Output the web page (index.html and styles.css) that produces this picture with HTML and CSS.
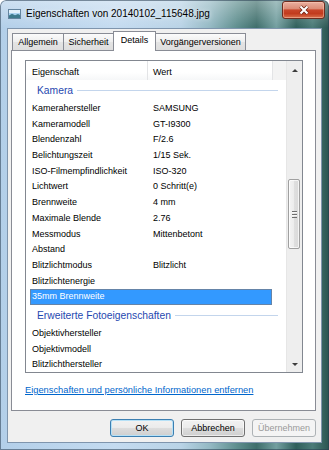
FILE: index.html
```html
<!DOCTYPE html>
<html lang="de">
<head>
    <meta charset="UTF-8">
    <title>Eigenschaften von 20140102_115648.jpg</title>
    <link rel="stylesheet" href="styles.css">
</head>
<body>
<div class="window">
    <div class="titlebar">
        <svg class="file-icon" width="13" height="10" viewBox="0 0 13 10">
            <rect x="0.5" y="0.5" width="12" height="9" fill="#a9d2f0" stroke="#64849e"/>
            <rect x="1" y="1" width="11" height="3" fill="#e2f0fa"/>
            <path d="M1 6.5 L4 4.8 L7 6.2 L10 5 L12 6 L12 9 L1 9 Z" fill="#3d7a8c"/>
        </svg>
        <span class="title">Eigenschaften von 20140102_115648.jpg</span>
        <div class="close-btn">
            <svg width="12" height="10" viewBox="0 0 12 10">
                <path d="M2.5 1.5 L9.5 8.5 M9.5 1.5 L2.5 8.5" stroke="#6a2414" stroke-width="3.6"/>
                <path d="M2.5 1.5 L9.5 8.5 M9.5 1.5 L2.5 8.5" stroke="#fff" stroke-width="2.1"/>
            </svg>
        </div>
    </div>

    <div class="client">
        <div class="tabs">
            <div class="tab tab-allgemein">Allgemein</div>
            <div class="tab tab-sicherheit">Sicherheit</div>
            <div class="tab tab-details active">Details</div>
            <div class="tab tab-versionen">Vorgängerversionen</div>
        </div>

        <div class="panel">
            <div class="listbox">
                <div class="list">
                    <div class="list-header">
                        <div class="col-name">Eigenschaft</div>
                        <div class="col-value">Wert</div>
                        <div class="col-rest"></div>
                    </div>

                    <div class="group"><span>Kamera</span><i class="group-line"></i></div>
                    <div class="row"><span class="name">Kamerahersteller</span><span class="value">SAMSUNG</span></div>
                    <div class="row"><span class="name">Kameramodell</span><span class="value">GT-I9300</span></div>
                    <div class="row"><span class="name">Blendenzahl</span><span class="value">F/2.6</span></div>
                    <div class="row"><span class="name">Belichtungszeit</span><span class="value">1/15 Sek.</span></div>
                    <div class="row"><span class="name">ISO-Filmempfindlichkeit</span><span class="value">ISO-320</span></div>
                    <div class="row"><span class="name">Lichtwert</span><span class="value">0 Schritt(e)</span></div>
                    <div class="row"><span class="name">Brennweite</span><span class="value">4 mm</span></div>
                    <div class="row"><span class="name">Maximale Blende</span><span class="value">2.76</span></div>
                    <div class="row"><span class="name">Messmodus</span><span class="value">Mittenbetont</span></div>
                    <div class="row"><span class="name">Abstand</span><span class="value"></span></div>
                    <div class="row"><span class="name">Blitzlichtmodus</span><span class="value">Blitzlicht</span></div>
                    <div class="row"><span class="name">Blitzlichtenergie</span><span class="value"></span></div>
                    <div class="row selected"><span class="name">35mm Brennweite</span><span class="value"></span></div>

                    <div class="group"><span>Erweiterte Fotoeigenschaften</span><i class="group-line"></i></div>
                    <div class="row"><span class="name">Objektivhersteller</span><span class="value"></span></div>
                    <div class="row"><span class="name">Objektivmodell</span><span class="value"></span></div>
                    <div class="row"><span class="name">Blitzlichthersteller</span><span class="value"></span></div>
                </div>

                <div class="scrollbar">
                    <div class="arrow"><span class="arrow-up"></span></div>
                    <div class="track">
                        <div class="thumb"><span class="grip"></span></div>
                    </div>
                    <div class="arrow"><span class="arrow-down"></span></div>
                </div>
            </div>

            <a class="link" href="#">Eigenschaften und persönliche Informationen entfernen</a>
        </div>

        <div class="buttons">
            <button class="btn btn-default">OK</button>
            <button class="btn">Abbrechen</button>
            <button class="btn" disabled>Übernehmen</button>
        </div>
    </div>
</div>
</body>
</html>
```

FILE: styles.css
```css
body {
    margin: 0;
    background: #fff;
    font-family: "Liberation Sans", Arial, sans-serif;
    color: #000;
}

/* aero frame */
.window {
    width: 329px;
    height: 450px;
    box-sizing: border-box;
    padding: 0 7px 7px 7px;
    display: flex;
    flex-direction: column;
    border-radius: 6px 6px 0 0;
    background:
        linear-gradient(180deg, rgba(255, 255, 255, 0.35) 0, rgba(255, 255, 255, 0) 28px),
        linear-gradient(90deg, #b3cfe9 0%, #c4dbf0 35%, #b9d3e6 55%, #93b8c2 64%, #5e8e8e 72%, #3e6e6b 78%, #739fa0 84%, #2f5f5b 90%, #4b7b78 95%, #2a5450 100%);
    box-shadow: inset 0 0 0 1px rgba(40, 60, 80, 0.55);
}

.titlebar {
    height: 28px;
    display: flex;
    align-items: center;
    padding-left: 1px;
}

.file-icon {
    flex: none;
}

.title {
    margin-left: 5px;
    padding-bottom: 2px;
    font-size: 10px;
    white-space: nowrap;
    text-shadow: 0 0 5px rgba(255, 255, 255, 0.9);
}

.close-btn {
    margin-left: auto;
    margin-right: -3px;
    align-self: flex-start;
    margin-top: 1px;
    width: 43px;
    height: 18px;
    box-sizing: border-box;
    border: 1px solid #6e2c1f;
    border-radius: 3px;
    background: linear-gradient(180deg, #eab0a0 0%, #dc8c76 42%, #c8462a 50%, #c23b1e 72%, #d9704c 100%);
    box-shadow: inset 0 0 0 1px rgba(255, 210, 190, 0.45);
    display: flex;
    align-items: center;
    justify-content: center;
}

/* dialog body */
.client {
    flex: 1;
    display: flex;
    flex-direction: column;
    background: #f0f0f0;
    border: 1px solid #7f95ad;
}

.tabs {
    display: flex;
    align-items: flex-end;
    height: 19px;
    margin-top: 2px;
    padding-left: 4px;
}

.tab {
    height: 17px;
    box-sizing: border-box;
    margin-left: -1px;
    border: 1px solid #898c95;
    border-bottom: none;
    background: linear-gradient(180deg, #fbfbfb 0%, #eeeeee 50%, #e4e4e4 51%, #dedede 100%);
    font-size: 9px;
    text-align: center;
    padding-top: 1px;
    line-height: 15px;
    white-space: nowrap;
}

.tab:first-child {
    margin-left: 0;
}

.tab-allgemein { width: 52px; }
.tab-sicherheit { width: 51px; }
.tab-details { width: 43px; }
.tab-versionen { width: 91px; }

.tab.active {
    height: 20px;
    margin-bottom: -1px;
    padding-top: 0;
    line-height: 16px;
    background: #fff;
    position: relative;
    z-index: 1;
}

.panel {
    height: 361px;
    box-sizing: border-box;
    margin: 0 5px 0 3px;
    padding: 9px 12px 0 13px;
    border: 1px solid #898c95;
    background: #fff;
    display: flex;
    flex-direction: column;
}

/* property list */
.listbox {
    height: 313px;
    box-sizing: border-box;
    border: 1px solid #828790;
    display: flex;
    overflow: hidden;
}

.list {
    flex: 1;
    overflow: hidden;
    font-size: 9px;
}

.list-header {
    display: flex;
    height: 19px;
    box-sizing: border-box;
    line-height: 16px;
    padding-top: 3px;
    background: linear-gradient(180deg, #fff 0%, #fff 60%, #f6f7f8 100%);
}

.col-name {
    width: 122px;
    box-sizing: border-box;
    padding-left: 6px;
    border-right: 1px solid #e3e4e6;
    margin-top: -3px;
    padding-top: 3px;
}

.col-value {
    width: 125px;
    box-sizing: border-box;
    padding-left: 5px;
    border-right: 1px solid #e3e4e6;
    margin-top: -3px;
    padding-top: 3px;
}

.col-rest {
    flex: 1;
    margin-top: -3px;
    background: #f3f3f3;
}

.group {
    height: 21px;
    display: flex;
    align-items: center;
    margin: 0 8px 0 4px;
    padding-left: 7px;
    font-size: 10.3px;
    color: #1f48b0;
    white-space: nowrap;
}

.group-line {
    flex: 1;
    height: 1px;
    margin-left: 4px;
    background: #c3d5ec;
}

.row {
    display: flex;
    width: 242px;
    height: 15.7px;
    line-height: 15.7px;
    margin-left: 4px;
    white-space: nowrap;
}

.row .name {
    width: 121px;
    padding-left: 2px;
    box-sizing: border-box;
}

.row .value {
    padding-left: 2px;
}

.row.selected {
    background: #3399ff;
    color: #fff;
    box-shadow: inset 0 0 0 1px #6584a8;
}

/* scrollbar */
.scrollbar {
    width: 16px;
    box-sizing: border-box;
    border-left: 1px solid #e6e6e6;
    background: #eeeeee;
    display: flex;
    flex-direction: column;
}

.arrow {
    height: 16px;
    display: flex;
    align-items: center;
    justify-content: center;
}

.arrow-up {
    margin-top: 3px;
    border-left: 3px solid transparent;
    border-right: 3px solid transparent;
    border-bottom: 3px solid #3d3d3d;
}

.arrow-down {
    border-left: 3px solid transparent;
    border-right: 3px solid transparent;
    border-top: 3px solid #3d3d3d;
}

.track {
    flex: 1;
}

.thumb {
    margin: 102px 2px 0 1px;
    height: 70px;
    box-sizing: border-box;
    border: 1px solid #a0a0a0;
    border-radius: 2px;
    background: linear-gradient(90deg, #f4f4f4 0%, #ececec 50%, #dfdfdf 51%, #dadada 100%);
    box-shadow: inset 0 0 0 1px rgba(255, 255, 255, 0.7);
    display: flex;
    align-items: center;
    justify-content: center;
}

.grip {
    width: 5px;
    height: 7px;
    background: repeating-linear-gradient(180deg, #6e6e6e 0, #6e6e6e 1px, #f8f8f8 1px, #f8f8f8 2px, transparent 2px, transparent 3px);
}

.link {
    align-self: flex-start;
    margin-top: 12px;
    font-size: 9.3px;
    color: #0066cc;
    text-decoration: underline;
}

/* buttons */
.buttons {
    display: flex;
    justify-content: flex-end;
    gap: 7px;
    margin: 8px 5px 0 0;
}

.btn {
    width: 64px;
    height: 18px;
    padding: 0;
    border: 1px solid #707070;
    border-radius: 3px;
    background: linear-gradient(180deg, #f2f2f2 0%, #ebebeb 49%, #dddddd 50%, #cfcfcf 100%);
    box-shadow: inset 0 0 0 1px rgba(255, 255, 255, 0.6);
    font-family: "Liberation Sans", Arial, sans-serif;
    font-size: 9px;
    color: #000;
}

.btn-default {
    border-color: #3c7fb1;
    box-shadow: inset 0 0 0 1px #b6e1f7;
}

.btn:disabled {
    border-color: #adb2b5;
    background: #f4f4f4;
    box-shadow: none;
    color: #9a9a9a;
}
```
